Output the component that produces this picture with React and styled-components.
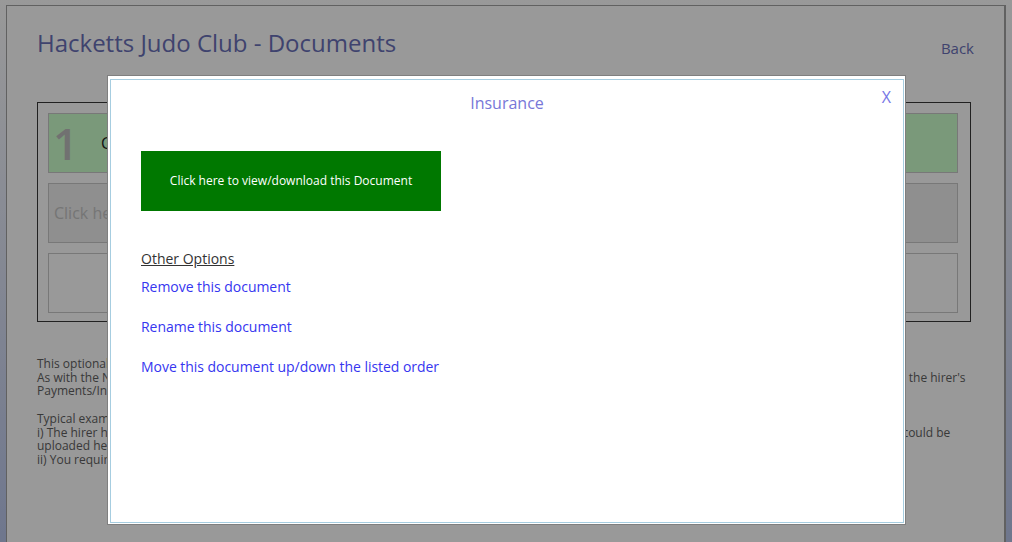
import React from "react";
import styled, { createGlobalStyle } from "styled-components";

const Global = createGlobalStyle`
  html, body { margin: 0; padding: 0; }
  html { min-height: 100%; background: linear-gradient(to bottom, #ffffff 0%, #b9c6ec 100%); }
  body {
    font-family: "Open Sans", "Liberation Sans", sans-serif;
    overflow: hidden;
    height: 542px;
  }
`;

const Page = styled.div`
  margin: 5px 0 0 6px;
  width: 1000px;
  min-height: 600px;
  box-sizing: border-box;
  background: #ffffff;
  border: 1px solid #a2a2a2;
  border-right-width: 2px;
  padding: 17px 31px 0 30px;
`;

const Header = styled.div`
  display: flex;
  align-items: flex-start;
  justify-content: space-between;
  height: 52px;
`;

const Title = styled.h1`
  margin: 0;
  font-size: 24px;
  font-weight: 400;
  line-height: 40px;
  color: #6a70b8;
`;

const BackLink = styled.a`
  font-size: 15px;
  line-height: 20px;
  color: #6a70b8;
  text-decoration: none;
  margin-top: 15px;
  margin-right: -1px;
`;

const DocBox = styled.div`
  margin-top: 27px;
  width: 934px;
  box-sizing: border-box;
  border: 1px solid #383838;
  padding: 10px 12px 8px 10px;
  display: flex;
  flex-direction: column;
  gap: 10px;
`;

const Row = styled.div`
  height: 60px;
  box-sizing: border-box;
  border: 1px solid #c8c8c8;
  background: ${(p) => p.$bg};
  display: flex;
  align-items: center;
  padding-left: 5px;
`;

const Num = styled.span`
  font-size: 44px;
  font-weight: 600;
  color: #bdbdbd;
  width: 48px;
  line-height: 1;
  margin-left: -1px;
`;

const RowName = styled.span`
  font-size: 16px;
  color: #222;
`;

const RowHint = styled.span`
  font-size: 16px;
  color: #c4c4c4;
`;

const Info = styled.div`
  margin-top: 35px;
  font-size: 12px;
  line-height: 13.7px;
  color: #606060;
  width: 934px;
`;

const Para = styled.p`
  margin: 0 0 13.7px;
`;

const Overlay = styled.div`
  position: fixed;
  inset: 0;
  background: rgba(0, 0, 0, 0.4);
`;

const Dialog = styled.div`
  position: fixed;
  left: 107px;
  top: 75px;
  width: 799px;
  height: 450px;
  box-sizing: border-box;
  background: #fff;
  border: 1px solid #7f7f7f;
  padding: 3px 1px 1px 2px;
`;

const DialogInner = styled.div`
  height: 100%;
  box-sizing: border-box;
  border: 1px solid #a6cde0;
  position: relative;
  padding: 0 30px;
`;

const DialogTitle = styled.div`
  text-align: center;
  font-size: 16px;
  color: #7777d8;
  padding-top: 12px;
  line-height: 22px;
`;

const Close = styled.a`
  position: absolute;
  right: 12px;
  top: 6px;
  font-size: 16px;
  color: #7777e6;
  text-decoration: none;
`;

const ViewButton = styled.button`
  margin-top: 37px;
  width: 300px;
  height: 60px;
  border: none;
  background: #007800;
  color: #fff;
  font-family: "Open Sans", "Liberation Sans", sans-serif;
  font-size: 12px;
  display: block;
  padding: 0 0 1px;
`;

const OptionsHead = styled.div`
  margin-top: 38px;
  font-size: 14px;
  color: #333;
  text-decoration: underline;
  line-height: 20px;
`;

const OptionList = styled.div`
  margin-top: 8px;
  display: flex;
  flex-direction: column;
  gap: 20px;
`;

const OptionLink = styled.a`
  font-size: 14px;
  line-height: 20px;
  letter-spacing: -0.04px;
  color: #3636f0;
  text-decoration: none;
`;

export default function App() {
  return (
    <>
      <Global />
      <Page>
        <Header>
          <Title>Hacketts Judo Club - Documents</Title>
          <BackLink href="#">Back</BackLink>
        </Header>
        <DocBox>
          <Row $bg="#ccffcc">
            <Num>1</Num>
            <RowName>Certificate of Insurance</RowName>
          </Row>
          <Row $bg="#eeeeee">
            <RowHint>Click here to add a new document</RowHint>
          </Row>
          <Row $bg="#ffffff" />
        </DocBox>
        <Info>
          <Para>
            This optional section allows you to store documents relating to this hirer, such as insurance certificates, risk assessments or signed agreements.
            <br />
            As with the Notes section, any documents stored here are private to you and your staff and are never visible to the hirer, even when they later log in to view the hirer's
            Payments/Invoices area.
          </Para>
          <Para>
            Typical examples of use:
            <br />
            i) The hirer has sent you a copy of their public liability insurance certificate or a risk assessment for their regular weekly activity held in the big hall, and this could be
            uploaded here for safe keeping.
            <br />
            ii) You require a signed copy of your terms and conditions of hire to be kept on file.
          </Para>
        </Info>
      </Page>
      <Overlay />
      <Dialog>
        <DialogInner>
          <DialogTitle>Insurance</DialogTitle>
          <Close href="#">X</Close>
          <ViewButton>Click here to view/download this Document</ViewButton>
          <OptionsHead>Other Options</OptionsHead>
          <OptionList>
            <OptionLink href="#">Remove this document</OptionLink>
            <OptionLink href="#">Rename this document</OptionLink>
            <OptionLink href="#">Move this document up/down the listed order</OptionLink>
          </OptionList>
        </DialogInner>
      </Dialog>
    </>
  );
}
